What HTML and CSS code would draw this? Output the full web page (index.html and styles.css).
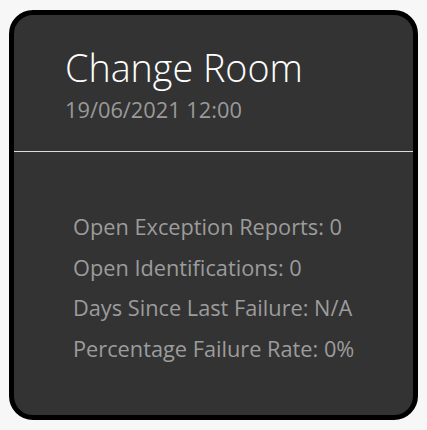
FILE: index.html
```html
<!DOCTYPE html>
<html>
<head>
<meta charset="utf-8">
<link rel="stylesheet" href="styles.css">
</head>
<body>
<div class="card">
  <div class="header">
    <div class="title">Change Room</div>
    <div class="date">19/06/2021 12:00</div>
  </div>
  <div class="stats">
    <div class="stat">Open Exception Reports: 0</div>
    <div class="stat">Open Identifications: 0</div>
    <div class="stat">Days Since Last Failure: N/A</div>
    <div class="stat">Percentage Failure Rate: 0%</div>
  </div>
</div>
</body>
</html>
```
FILE: styles.css
```css
html, body {
  margin: 0;
  padding: 0;
  background: #f7f7f7;
}
body {
  padding: 10px 9px;
  font-family: "Open Sans", "Noto Sans", sans-serif;
}
.card {
  box-sizing: border-box;
  width: 409px;
  height: 410px;
  background: #333333;
  border: 5px solid #000;
  border-radius: 24px;
  display: flex;
  flex-direction: column;
}
.header {
  height: 137px;
  box-sizing: border-box;
  padding: 31px 0 0 51px;
  border-bottom: 1px solid #dcdcdc;
}
.title {
  color: #ffffff;
  font-weight: 300;
  font-size: 37.7px;
  line-height: 44px;
}
.date {
  margin-top: 6px;
  color: #9a9a9a;
  font-size: 21.8px;
  line-height: 28px;
}
.stats {
  padding: 55px 0 0 59px;
  display: flex;
  flex-direction: column;
}
.stat {
  color: #9c9c9c;
  font-size: 21.75px;
  line-height: 40.5px;
}
```
